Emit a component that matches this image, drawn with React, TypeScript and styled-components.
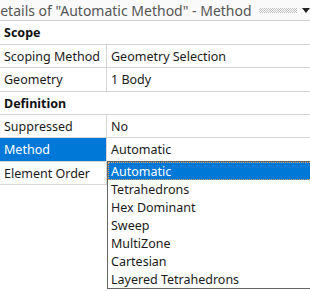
import React from 'react'
import styled, { createGlobalStyle } from 'styled-components'

const GlobalStyle = createGlobalStyle`
  html, body {
    margin: 0;
    padding: 0;
    background: #ffffff;
  }
  body {
    font-family: "Noto Sans", "Open Sans", sans-serif;
  }
`

const Panel = styled.div`
  position: relative;
  width: 310px;
  height: 291px;
  overflow: hidden;
  background: #ffffff;
`

const TitleBar = styled.div`
  display: flex;
  align-items: center;
  height: 21px;
  box-sizing: border-box;
  border-bottom: 1px solid #cfcfcf;
  background: #fafafa;
  overflow: hidden;
  white-space: nowrap;
`

const Title = styled.span`
  margin-left: -10px;
  font-size: 14px;
  color: #555555;
  flex: none;
`

const Grip = styled.div`
  flex: none;
  width: 38px;
  height: 5px;
  margin-left: 7px;
  background-image: repeating-conic-gradient(#c4c4c4 0% 25%, transparent 0% 50%);
  background-size: 2px 2px;
`

const Arrow = styled.div`
  flex: none;
  margin-left: 5px;
  width: 0;
  height: 0;
  border-left: 4px solid transparent;
  border-right: 4px solid transparent;
  border-top: 5px solid #222222;
`

const Grid = styled.div`
  display: flex;
  flex-direction: column;
`

const Row = styled.div<{ $h: number }>`
  display: grid;
  grid-template-columns: 107px 1fr;
  height: ${p => p.$h}px;
  box-sizing: border-box;
  border-bottom: 1px solid #d6d6d6;
  font-size: 12.5px;
  color: #1a1a1a;
`

const Section = styled.div<{ $h: number }>`
  display: flex;
  align-items: center;
  height: ${p => p.$h}px;
  box-sizing: border-box;
  border-bottom: 1px solid #d6d6d6;
  padding-left: 4px;
  font-size: 12.5px;
  font-weight: bold;
  color: #111111;
`

const Label = styled.div<{ $selected?: boolean }>`
  display: flex;
  align-items: center;
  padding-left: 4px;
  border-right: 1px solid #d6d6d6;
  background: ${p => (p.$selected ? '#0078d7' : 'transparent')};
  color: ${p => (p.$selected ? '#ffffff' : '#1a1a1a')};
  white-space: nowrap;
  overflow: hidden;
`

const Value = styled.div`
  display: flex;
  align-items: center;
  padding-left: 4px;
  white-space: nowrap;
  overflow: hidden;
`

const Combo = styled(Value)`
  background: #ffffff;
`

const DropList = styled.ul`
  position: absolute;
  left: 107px;
  top: 161px;
  width: 210px;
  margin: 0;
  padding: 0;
  list-style: none;
  background: #ffffff;
  border: 1px solid #646464;
  font-size: 12.5px;
`

const Item = styled.li<{ $active?: boolean }>`
  height: 18px;
  display: flex;
  align-items: center;
  padding-left: 3px;
  box-sizing: border-box;
  background: ${p => (p.$active ? '#0078d7' : '#ffffff')};
  color: ${p => (p.$active ? '#ffffff' : '#1a1a1a')};
  outline: ${p => (p.$active ? '1px dotted #e0a060' : 'none')};
  outline-offset: -1px;
`

const rows = [
  { type: 'section', label: 'Scope', h: 24 },
  { type: 'row', label: 'Scoping Method', value: 'Geometry Selection', h: 23 },
  { type: 'row', label: 'Geometry', value: '1 Body', h: 24 },
  { type: 'section', label: 'Definition', h: 23 },
  { type: 'row', label: 'Suppressed', value: 'No', h: 23 },
  { type: 'row', label: 'Method', value: 'Automatic', h: 24, selected: true },
  { type: 'row', label: 'Element Order', value: '', h: 23 },
]

const options = [
  'Automatic',
  'Tetrahedrons',
  'Hex Dominant',
  'Sweep',
  'MultiZone',
  'Cartesian',
  'Layered Tetrahedrons',
]

export default function App() {
  return (
    <Panel>
      <GlobalStyle />
      <TitleBar>
        <Title>Details of "Automatic Method" - Method</Title>
        <Grip />
        <Arrow />
      </TitleBar>
      <Grid>
        {rows.map(r =>
          r.type === 'section' ? (
            <Section key={r.label} $h={r.h}>{r.label}</Section>
          ) : (
            <Row key={r.label} $h={r.h}>
              <Label $selected={r.selected}>{r.label}</Label>
              {r.selected ? <Combo>{r.value}</Combo> : <Value>{r.value}</Value>}
            </Row>
          )
        )}
      </Grid>
      <DropList>
        {options.map((o, i) => (
          <Item key={o} $active={i === 0}>{o}</Item>
        ))}
      </DropList>
    </Panel>
  )
}
